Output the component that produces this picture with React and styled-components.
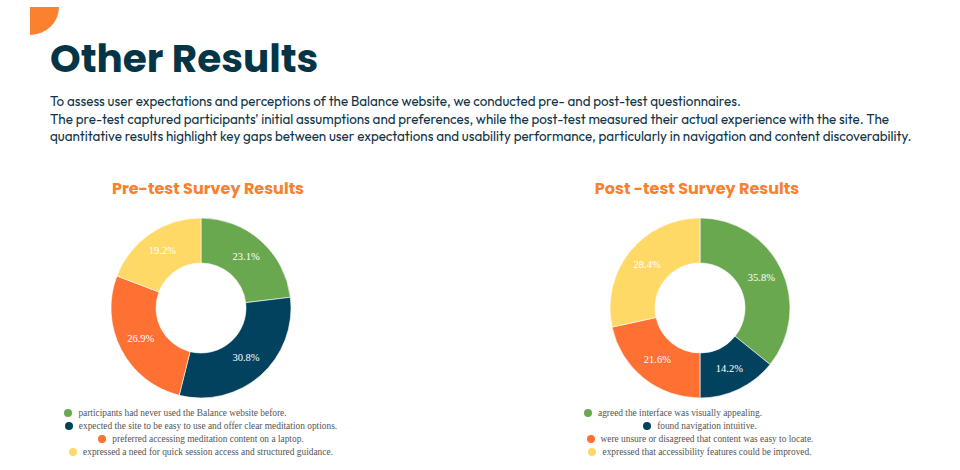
import React from 'react';
import styled, { createGlobalStyle } from 'styled-components';

const GlobalStyle = createGlobalStyle`
  body {
    margin: 0;
    background: #ffffff;
  }
`;

const Page = styled.div`
  width: 960px;
  height: 470px;
  overflow: hidden;
  background: #ffffff;
  padding-top: 7px;
  box-sizing: border-box;
`;

const Header = styled.header`
  padding: 0 40px 0 50px;
`;

const Corner = styled.div`
  width: 29px;
  height: 28px;
  margin-left: -20px;
  background: #fb8030;
  border-bottom-right-radius: 100%;
`;

const Title = styled.h1`
  margin: -2px 0 0;
  font-family: 'Poppins', 'Inter', sans-serif;
  font-weight: 700;
  font-size: 39px;
  line-height: 52px;
  color: #033547;
`;

const Intro = styled.p`
  margin: 8px 0 0;
  font-family: 'Outfit', 'Lato', sans-serif;
  font-size: 13.4px;
  line-height: 17.5px;
  color: #0e3346;
`;

const Charts = styled.section`
  display: grid;
  grid-template-columns: 402px 400px;
  column-gap: 98px;
  margin-top: 33px;
`;

const Column = styled.div`
  display: flex;
  flex-direction: column;
  align-items: center;
`;

const ChartTitle = styled.h2`
  margin: 0;
  font-family: 'Poppins', 'Inter', sans-serif;
  font-weight: 700;
  font-size: 16px;
  line-height: 20px;
  color: #f8812f;
  transform: translateX(${(p) => p.$shift || 0}px);
`;

const Donut = styled.svg`
  display: block;
  margin-top: 18px;
`;

const Legend = styled.ul`
  list-style: none;
  margin: 8px 0 0;
  padding: 0;
  display: flex;
  flex-direction: column;
  align-items: center;
`;

const LegendRow = styled.li`
  display: flex;
  align-items: center;
  gap: 6px;
  height: 13px;
  font-family: 'Liberation Serif', 'Times New Roman', serif;
  font-size: 9.4px;
  color: #555555;
  padding-right: ${(p) => p.$pad || 0}px;
`;

const Dot = styled.span`
  width: 8px;
  height: 8px;
  border-radius: 50%;
  background: ${(p) => p.$color};
  flex: none;
`;

const COLORS = {
  green: '#6aa84f',
  navy: '#03425e',
  orange: '#ff7033',
  yellow: '#ffd966',
};

const preTest = [
  { value: 23.1, color: COLORS.green, text: 'participants had never used the Balance website before.', pad: 51 },
  { value: 30.8, color: COLORS.navy, text: 'expected the site to be easy to use and offer clear meditation options.' },
  { value: 26.9, color: COLORS.orange, text: 'preferred accessing meditation content on a laptop.' },
  { value: 19.2, color: COLORS.yellow, text: 'expressed a need for quick session access and structured guidance.' },
];

const postTest = [
  { value: 35.8, color: COLORS.green, text: 'agreed the interface was visually appealing.', pad: 54 },
  { value: 14.2, color: COLORS.navy, text: 'found navigation intuitive.' },
  { value: 21.6, color: COLORS.orange, text: 'were unsure or disagreed that content was easy to locate.' },
  { value: 28.4, color: COLORS.yellow, text: 'expressed that accessibility features could be improved.' },
];

const R = 90;
const INNER = 45;
const C = 91;

const point = (angle, r) => {
  const rad = ((angle - 90) * Math.PI) / 180;
  return [C + r * Math.cos(rad), C + r * Math.sin(rad)];
};

const arcPath = (start, end) => {
  const large = end - start > 180 ? 1 : 0;
  const [x1, y1] = point(start, R);
  const [x2, y2] = point(end, R);
  const [x3, y3] = point(end, INNER);
  const [x4, y4] = point(start, INNER);
  return `M${x1} ${y1} A${R} ${R} 0 ${large} 1 ${x2} ${y2} L${x3} ${y3} A${INNER} ${INNER} 0 ${large} 0 ${x4} ${y4} Z`;
};

const DonutChart = ({ data }) => {
  let angle = 0;
  const slices = data.map((d) => {
    const start = angle;
    const end = angle + (d.value / 100) * 360;
    angle = end;
    const [lx, ly] = point((start + end) / 2, 68);
    return { ...d, start, end, lx, ly };
  });

  return (
    <Donut width={C * 2} height={C * 2} viewBox={`0 0 ${C * 2} ${C * 2}`}>
      {slices.map((s, i) => (
        <path key={i} d={arcPath(s.start, s.end)} fill={s.color} stroke="#ffffff" strokeWidth="0.6" />
      ))}
      {slices.map((s, i) => (
        <text
          key={`t${i}`}
          x={s.lx}
          y={s.ly}
          fill="#ffffff"
          fontFamily="'Liberation Serif', serif"
          fontSize="10.5"
          textAnchor="middle"
          dominantBaseline="middle"
        >
          {s.value}%
        </text>
      ))}
    </Donut>
  );
};

const SurveyChart = ({ title, data, shift }) => (
  <Column>
    <ChartTitle $shift={shift}>{title}</ChartTitle>
    <DonutChart data={data} />
    <Legend>
      {data.map((d, i) => (
        <LegendRow key={i} $pad={d.pad}>
          <Dot $color={d.color} />
          {d.text}
        </LegendRow>
      ))}
    </Legend>
  </Column>
);

export default function App() {
  return (
    <>
      <GlobalStyle />
      <Page>
        <Header>
          <Corner />
          <Title>Other Results</Title>
          <Intro>
            To assess user expectations and perceptions of the Balance website, we conducted pre- and post-test questionnaires.
            <br />
            The pre-test captured participants' initial assumptions and preferences, while the post-test measured their actual experience with the site. The
            quantitative results highlight key gaps between user expectations and usability performance, particularly in navigation and content discoverability.
          </Intro>
        </Header>
        <Charts>
          <SurveyChart title="Pre-test Survey Results" data={preTest} shift={7} />
          <SurveyChart title="Post -test Survey Results" data={postTest} shift={-3} />
        </Charts>
      </Page>
    </>
  );
}
